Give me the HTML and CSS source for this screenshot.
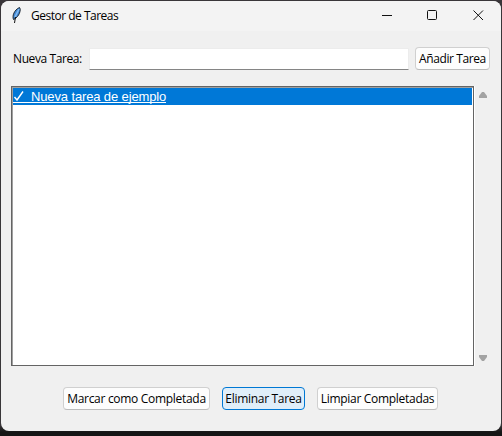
FILE: index.html
```
<!DOCTYPE html>
<html lang="es">
<head>
<meta charset="utf-8">
<title>Gestor de Tareas</title>
<link rel="stylesheet" href="styles.css">
</head>
<body>
<div class="window">
  <header class="titlebar">
    <svg class="feather" width="12" height="18" viewBox="0 0 12 18">
      <path d="M3.500 13.500C2 10 4 4 9.500 1.500C11.500 4 9 10.500 4.500 13Z" fill="#4389d2" stroke="#111820" stroke-width="0.900"/>
      <path d="M9 3L5 11" stroke="#83bbf2" stroke-width="1.500"/>
      <path d="M5.500 11L4.500 17" stroke="#111" stroke-width="1"/>
    </svg>
    <h1 class="title">Gestor de Tareas</h1>
    <div class="controls">
      <svg width="46" height="30" viewBox="0 0 46 30"><path d="M18 14.500h10"/></svg>
      <svg width="46" height="30" viewBox="0 0 46 30"><rect x="17.500" y="9.500" width="9" height="9" rx="1"/></svg>
      <svg width="46" height="30" viewBox="0 0 46 30"><path d="M17.500 9.500l9.500 9.500M27 9.500l-9.500 9.500"/></svg>
    </div>
  </header>
  <main class="content">
    <div class="entry-row">
      <label class="label" for="task">Nueva Tarea:</label>
      <input class="entry" id="task" type="text">
      <button class="button add">Añadir Tarea</button>
    </div>
    <div class="list-row">
      <div class="list">
        <div class="item"><svg class="check" width="12" height="12" viewBox="0 0 12 12"><path d="M1.500 7L4 10L10 1.500"/></svg><span class="item-text">Nueva tarea de ejemplo</span></div>
      </div>
      <div class="scrollbar">
        <svg width="10" height="8" viewBox="0 0 10 8"><path d="M4 1h2l3 4v2H1V5z"/></svg>
        <svg width="10" height="8" viewBox="0 0 10 8"><path d="M1 1h8v2L6 7H4L1 3z"/></svg>
      </div>
    </div>
    <div class="actions">
      <button class="button complete">Marcar como Completada</button>
      <button class="button remove">Eliminar Tarea</button>
      <button class="button clear">Limpiar Completadas</button>
    </div>
  </main>
</div>
</body>
</html>
```
FILE: styles.css
```
* { box-sizing: border-box; }
body {
  margin: 0;
  height: 436px;
  padding: 1px 1px 5px;
  overflow: hidden;
  background: linear-gradient(#393639 0, #393639 425px, #151515 432px);
  font-family: "Open Sans", "Noto Sans", sans-serif;
  font-size: 12px;
  color: #000;
}
.window {
  height: 430px;
  border-radius: 8px;
  overflow: hidden;
  background: #f0f0f0;
}
.titlebar {
  display: flex;
  height: 30px;
  padding-left: 9px;
  background: #f3f3f3;
}
.feather { margin-top: 5px; fill: none; }
.title {
  width: 100px;
  margin: 0 0 0 9px;
  font-size: 12px;
  font-weight: 400;
  line-height: 30px;
  letter-spacing: -0.5px;
  white-space: nowrap;
}
.controls { display: flex; margin: 0 -1px 0 auto; fill: none; stroke: #111; }
.content { padding: 16px 10px 0; }
.entry-row { display: flex; align-items: center; height: 23px; }
.label {
  width: 78px;
  padding-left: 2px;
  line-height: 23px;
  letter-spacing: -0.4px;
  white-space: nowrap;
}
.entry {
  width: 320px;
  height: 22px;
  padding: 0 4px;
  border: 1px solid #ececec;
  border-bottom-color: #858585;
  border-radius: 1px;
  background: #fff;
  outline: none;
}
.button {
  height: 23px;
  padding: 0;
  border: 1px solid #d0d0d0;
  border-bottom-color: #bcbcbc;
  border-radius: 4px;
  background: #fdfdfd;
  color: #000;
  font: inherit;
  line-height: 21px;
  letter-spacing: -0.3px;
  white-space: nowrap;
}
.add { width: 75px; margin-left: 6px; letter-spacing: -0.4px; }
.list-row { display: flex; height: 280px; margin-top: 16px; }
.list {
  width: 463px;
  padding: 1px;
  border: 1px solid #646464;
  background: #fff;
  box-shadow: inset 1px 1px #a0a0a0, 1px 0 #fff;
}
.item {
  display: flex;
  height: 17px;
  background: #0078d7;
  color: #fff;
  font: 13px/17px "Liberation Sans", Arial, sans-serif;
  letter-spacing: -0.13px;
  white-space: nowrap;
}
.item::before {
  content: "";
  width: 18px;
  height: 1px;
  margin: 14px -18px 0 0;
  background: #fff;
}
.check { width: 12px; margin: 2px 6px 0 0; fill: none; stroke: #fff; stroke-width: 1.4; }
.item-text { height: 15px; border-bottom: 1px solid #fff; }
.scrollbar {
  display: flex;
  flex-direction: column;
  justify-content: space-between;
  margin-left: 4px;
  padding: 5px 0 4px;
  fill: #a3a3a3;
}
.actions { display: flex; justify-content: center; gap: 12px; margin-top: 21px; padding-right: 1px; }
.complete { width: 147px; }
.remove { width: 83px; border-color: #0078d4; background: #e0eef9; }
.clear { width: 121px; }
```
